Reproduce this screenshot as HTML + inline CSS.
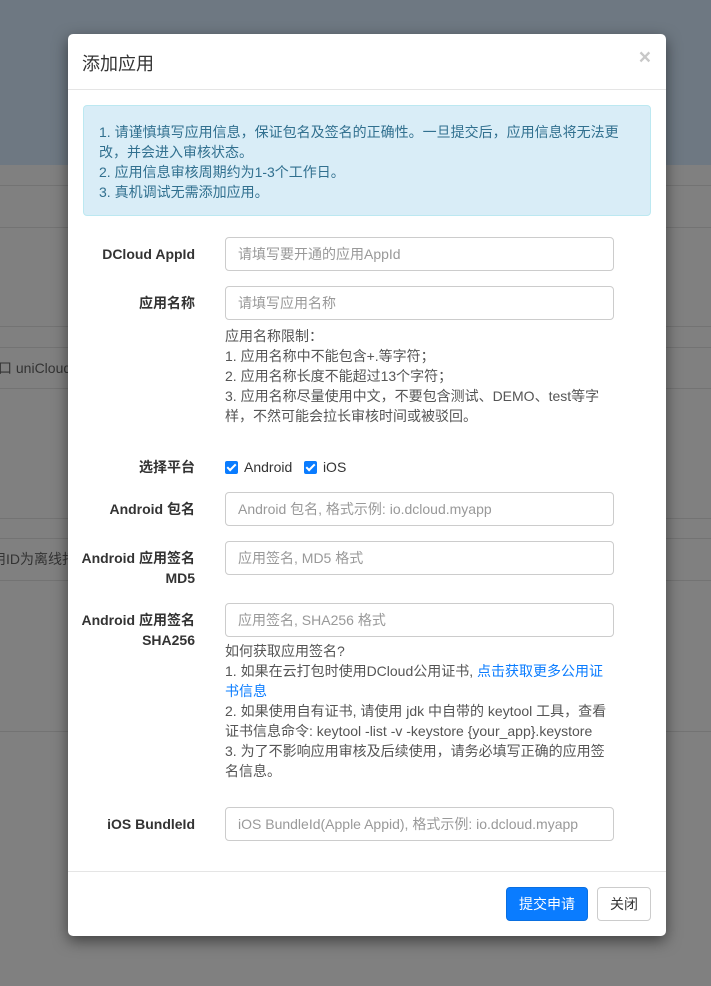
<!DOCTYPE html>
<html><head><meta charset="utf-8"><style>
*{box-sizing:border-box;margin:0;padding:0}
body{width:711px;height:986px;overflow:hidden;background:#808080;font-family:"Liberation Sans","Noto Sans CJK SC",sans-serif;font-size:14px;position:relative}
.top{position:absolute;left:0;top:0;width:711px;height:165px;background:#6e7882}
.ln{position:absolute;left:0;width:711px;height:1px;background:#737373}
.bt{position:absolute;left:0;color:#333;font-size:14px;white-space:nowrap}
.modal{position:absolute;left:68px;top:34px;width:598px;height:902px;background:#fff;border-radius:5px;box-shadow:0 5px 15px rgba(0,0,0,.5)}
.title{position:absolute;left:14px;top:16px;font-size:18px;color:#333}
.x{position:absolute;right:15px;top:12px;font-size:21px;font-weight:bold;color:#c8c8c8}
.hr{position:absolute;left:0;width:598px;height:1px;background:#e5e5e5}
.alert{position:absolute;left:15px;top:71px;width:568px;height:111px;background:#d9edf7;border:1px solid #bce8f1;border-radius:4px;color:#31708f;padding:16px 15px;line-height:20px}
.lbl{position:absolute;right:471px;font-weight:bold;color:#333;text-align:right;line-height:20px;white-space:nowrap}
.inp{position:absolute;left:157px;width:389px;height:34px;border:1px solid #ccc;border-radius:4px;color:#999;padding:7px 12px;line-height:18px;white-space:nowrap}
.help{position:absolute;left:157px;width:392px;color:#555;line-height:20px}
.cb{display:inline-block;width:13px;height:13px;background:#0a7cff;border-radius:2px;vertical-align:-2px;position:relative;margin-right:6px}
.cb:after{content:"";position:absolute;left:4px;top:1px;width:3px;height:7px;border:solid #fff;border-width:0 2px 2px 0;transform:rotate(45deg)}
.btn{position:absolute;top:853px;height:34px;border-radius:4px;line-height:32px;text-align:center}
</style></head><body>
<div class="top"></div>
<div class="ln" style="top:185px"></div><div class="ln" style="top:227px"></div>
<div class="ln" style="top:326px"></div><div class="ln" style="top:347px"></div><div class="ln" style="top:388px"></div>
<div class="ln" style="top:518px"></div><div class="ln" style="top:538px"></div><div class="ln" style="top:580px"></div>
<div class="ln" style="top:731px"></div>
<div class="bt" style="top:358px;left:-2px">口 uniCloud</div>
<div class="bt" style="top:549px;left:-8px">用ID为离线打</div>
<div class="modal">
<div class="title">添加应用</div>
<div class="x">×</div>
<div class="hr" style="top:55px"></div>
<div class="alert">1. 请谨慎填写应用信息，保证包名及签名的正确性。一旦提交后，应用信息将无法更改，并会进入审核状态。<br>2. 应用信息审核周期约为1-3个工作日。<br>3. 真机调试无需添加应用。</div>
<div class="lbl" style="top:210px">DCloud AppId</div>
<div class="inp" style="top:203px">请填写要开通的应用AppId</div>
<div class="lbl" style="top:259px">应用名称</div>
<div class="inp" style="top:252px">请填写应用名称</div>
<div class="help" style="top:292px">应用名称限制：<br>1. 应用名称中不能包含+.等字符；<br>2. 应用名称长度不能超过13个字符；<br>3. 应用名称尽量使用中文，不要包含测试、DEMO、test等字样，不然可能会拉长审核时间或被驳回。</div>
<div class="lbl" style="top:423px">选择平台</div>
<div class="help" style="top:423px;color:#333"><span class="cb"></span>Android&nbsp;&nbsp;&nbsp;<span class="cb"></span>iOS</div>
<div class="lbl" style="top:465px">Android 包名</div>
<div class="inp" style="top:458px">Android 包名, 格式示例: io.dcloud.myapp</div>
<div class="lbl" style="top:514px">Android 应用签名<br>MD5</div>
<div class="inp" style="top:507px">应用签名, MD5 格式</div>
<div class="lbl" style="top:576px">Android 应用签名<br>SHA256</div>
<div class="inp" style="top:569px">应用签名, SHA256 格式</div>
<div class="help" style="top:607px">如何获取应用签名?<br>1. 如果在云打包时使用DCloud公用证书, <span style="color:#0a7cff">点击获取更多公用证书信息</span><br>2. 如果使用自有证书, 请使用 jdk 中自带的 keytool 工具，查看证书信息命令: keytool -list -v -keystore {your_app}.keystore<br>3. 为了不影响应用审核及后续使用，请务必填写正确的应用签名信息。</div>
<div class="lbl" style="top:780px">iOS BundleId</div>
<div class="inp" style="top:773px">iOS BundleId(Apple Appid), 格式示例: io.dcloud.myapp</div>
<div class="hr" style="top:837px"></div>
<div class="btn" style="left:438px;width:82px;background:#0a7cff;color:#fff;border:1px solid #0a6fe0">提交申请</div>
<div class="btn" style="left:529px;width:54px;background:#fff;color:#333;border:1px solid #ccc">关闭</div>
</div>
</body></html>
